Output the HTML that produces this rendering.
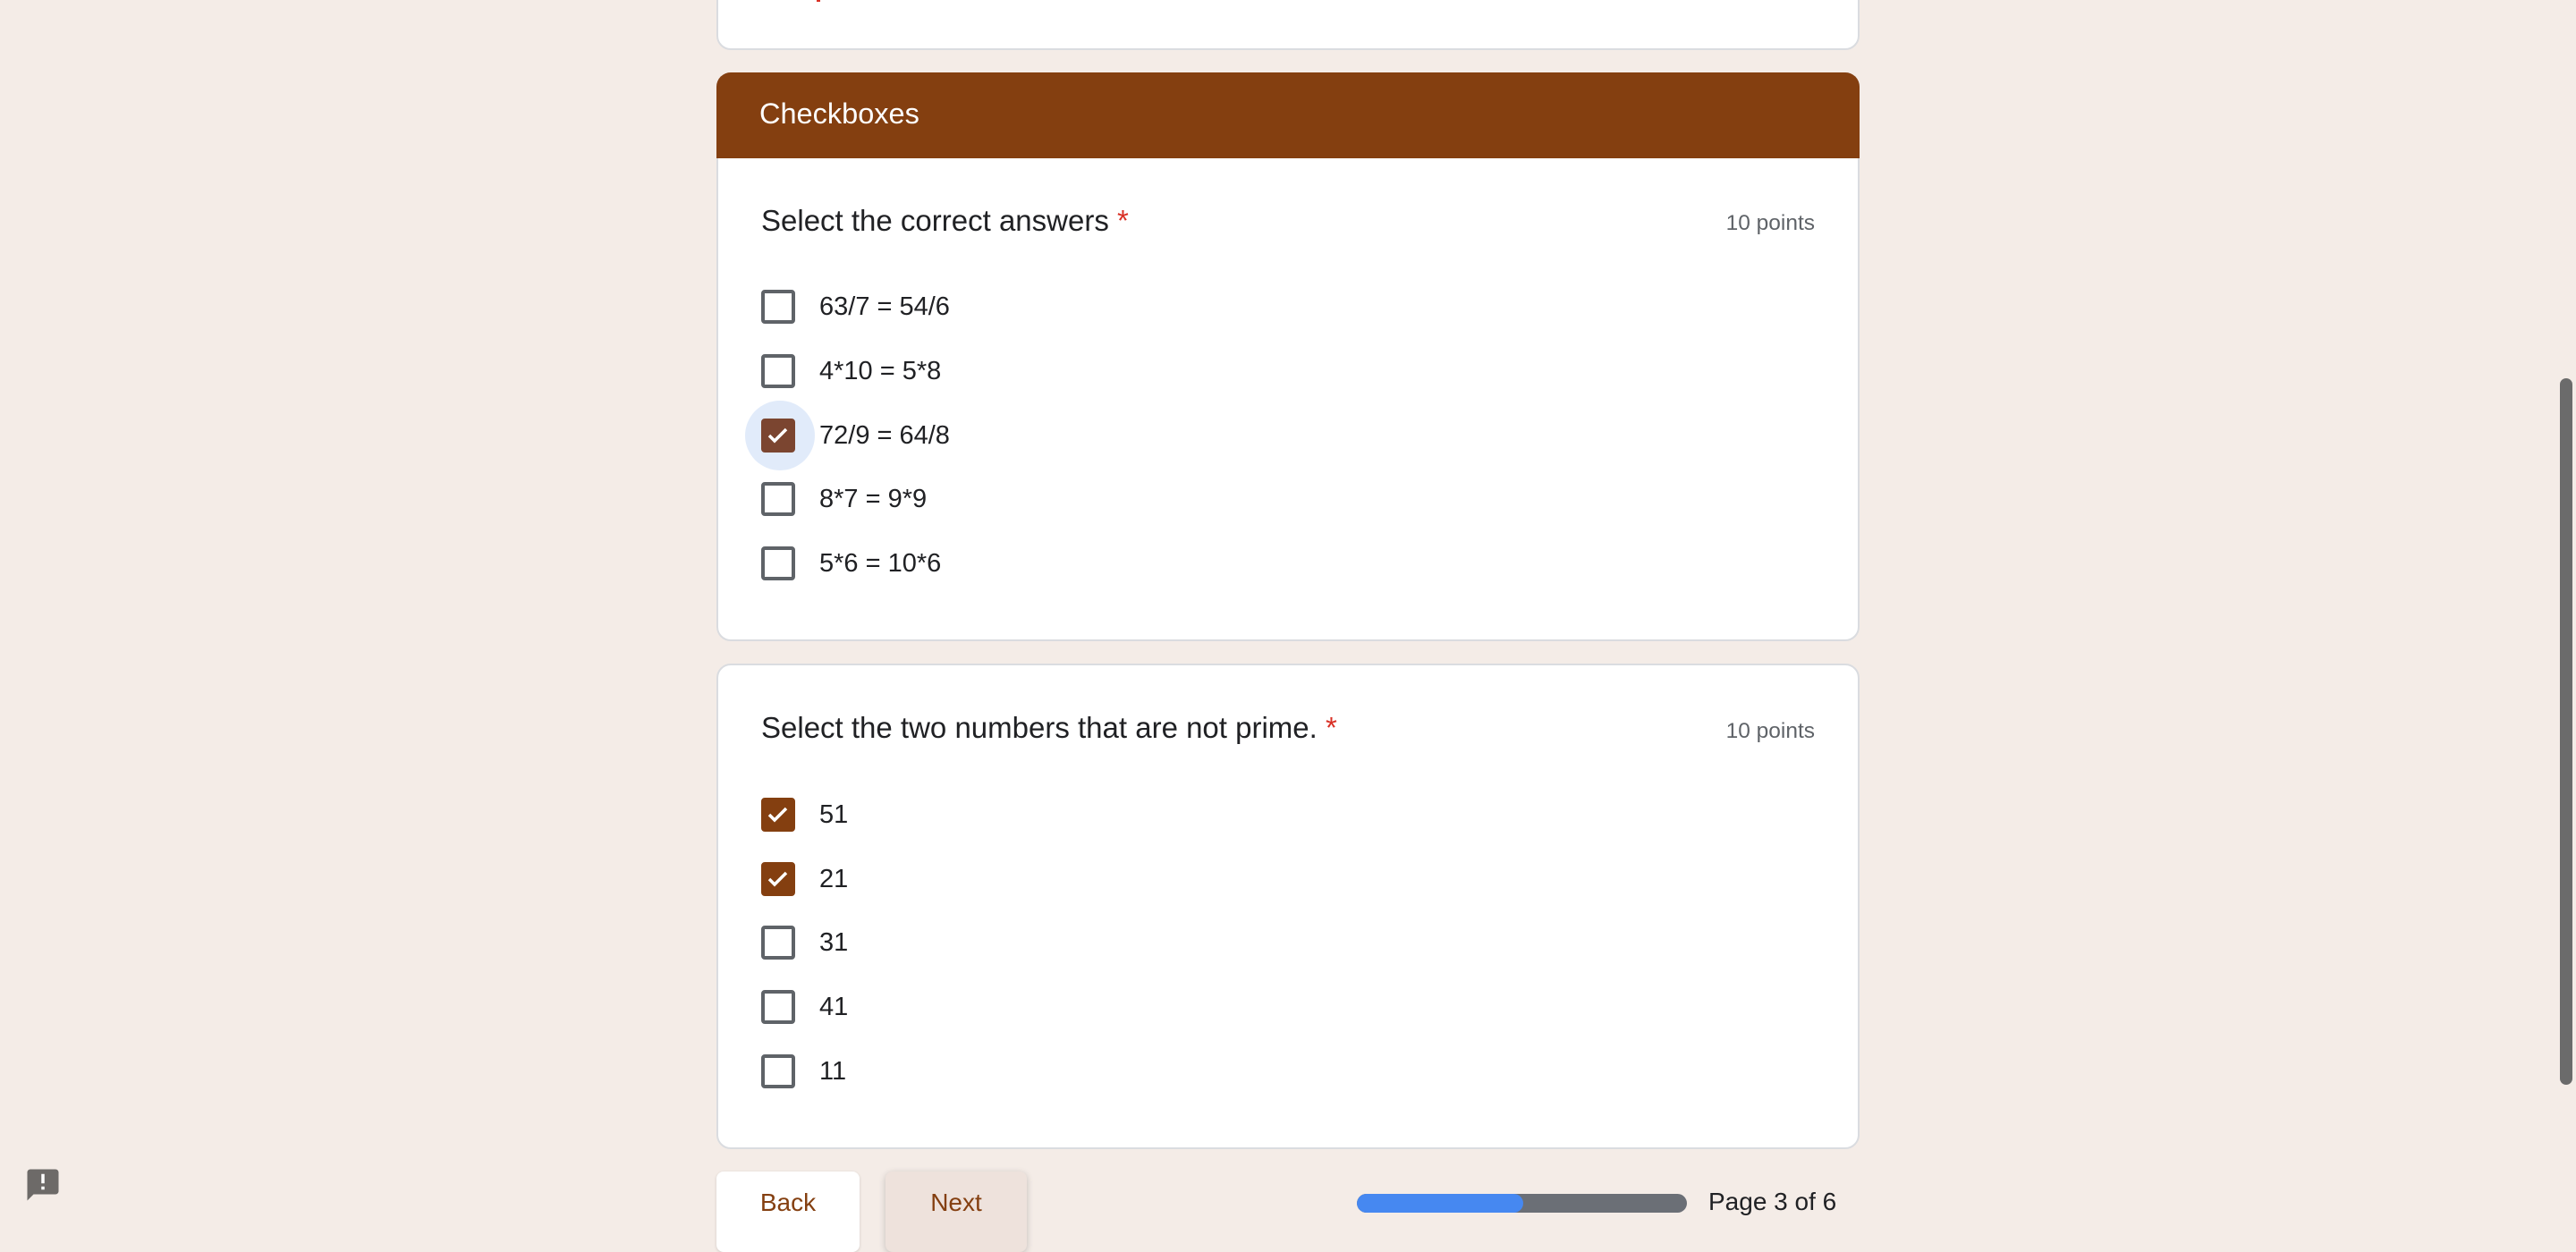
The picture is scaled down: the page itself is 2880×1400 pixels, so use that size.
<!DOCTYPE html>
<html><head><style>
body{margin:0;width:2880px;height:1382px;background:#f4ece7;font-family:"Liberation Sans",Arial,sans-serif;position:relative;overflow:hidden;color:#202124}
.card{position:absolute;left:801px;width:1278px;background:#fff;border:2px solid #dadce0;border-radius:16px;box-sizing:border-box}
.hdr{position:absolute;left:801px;width:1278px;top:81px;height:96px;background:#843f10;border-radius:16px 16px 0 0;color:#fff;font-size:32.5px}
.q{position:absolute;left:48px;font-size:33px}
.q span{color:#d93025}
.pts{position:absolute;right:48px;font-size:24.5px;color:#5f6368}
.opt{position:absolute;left:48px;height:40px;font-size:29px;line-height:40px}
.cb{position:absolute;left:0;top:1px;width:38px;height:38px;box-sizing:border-box;border:4px solid #5f6368;border-radius:4px}
.cb.on{background:#843f10;border-color:#843f10}
.opt .t{position:absolute;left:65px;white-space:nowrap}
.btn{position:absolute;top:1310px;width:160px;height:90px;border-radius:8px;color:#843f10;font-size:28px;text-align:center;line-height:70px}
</style></head><body>
<div class="card" style="top:-20px;height:76px"><div style="position:absolute;left:110px;top:14px;width:4px;height:6px;background:#d93025"></div></div>
<div class="card" style="top:81px;height:636px"></div>
<div class="hdr"><div style="position:absolute;left:48px;top:28px">Checkboxes</div></div>
<div class="card" style="top:81px;height:636px;background:none;border-color:transparent">
 <div class="q" style="top:145px">Select the correct answers <span>*</span></div>
 <div class="pts" style="top:153px">10 points</div>
 <div class="opt" style="top:240px"><div class="cb"></div><div class="t">63/7 = 54/6</div></div>
 <div class="opt" style="top:312px"><div class="cb"></div><div class="t">4*10 = 5*8</div></div>
 <div class="opt" style="top:384px"><div style="position:absolute;left:-18px;top:-19px;width:78px;height:78px;border-radius:50%;background:#e1ebfa"></div><div class="cb on" style="background:#7b4530;border-color:#7b4530"><svg width="30" height="30" viewBox="0 0 30 30" style="position:absolute;left:0;top:0"><path d="M5 15l6 6 13-13" stroke="#fff" stroke-width="3.5" fill="none"/></svg></div><div class="t">72/9 = 64/8</div></div>
 <div class="opt" style="top:455px"><div class="cb"></div><div class="t">8*7 = 9*9</div></div>
 <div class="opt" style="top:527px"><div class="cb"></div><div class="t">5*6 = 10*6</div></div>
</div>
<div class="card" style="top:742px;height:543px">
 <div class="q" style="top:51px">Select the two numbers that are not prime. <span>*</span></div>
 <div class="pts" style="top:60px">10 points</div>
 <div class="opt" style="top:147px"><div class="cb on"><svg width="30" height="30" viewBox="0 0 30 30" style="position:absolute;left:0;top:0"><path d="M5 15l6 6 13-13" stroke="#fff" stroke-width="3.5" fill="none"/></svg></div><div class="t">51</div></div>
 <div class="opt" style="top:219px"><div class="cb on"><svg width="30" height="30" viewBox="0 0 30 30" style="position:absolute;left:0;top:0"><path d="M5 15l6 6 13-13" stroke="#fff" stroke-width="3.5" fill="none"/></svg></div><div class="t">21</div></div>
 <div class="opt" style="top:290px"><div class="cb"></div><div class="t">31</div></div>
 <div class="opt" style="top:362px"><div class="cb"></div><div class="t">41</div></div>
 <div class="opt" style="top:434px"><div class="cb"></div><div class="t">11</div></div>
</div>
<div class="btn" style="left:801px;background:#fff;box-shadow:0 1px 3px rgba(0,0,0,.15)">Back</div>
<div class="btn" style="left:990px;width:158px;background:#eee2dc;box-shadow:0 2px 8px rgba(0,0,0,.2)">Next</div>
<div style="position:absolute;left:1517px;top:1335px;width:369px;height:21px;border-radius:11px;background:#6b6f76;overflow:hidden"><div style="width:186px;height:100%;background:#4688f1;border-radius:11px"></div></div>
<div style="position:absolute;left:1910px;top:1328px;font-size:28px;color:#202124">Page 3 of 6</div>
<div style="position:absolute;left:2862px;top:423px;width:14px;height:790px;border-radius:7px;background:#6b6b6b"></div>
<svg style="position:absolute;left:27px;top:1304px" width="42" height="42" viewBox="0 0 24 24"><path d="M20 2H4c-1.1 0-2 .9-2 2v18l4-4h14c1.1 0 2-.9 2-2V4c0-1.1-.9-2-2-2z" fill="#6d6a68"/><path d="M11 5h2v6h-2zM11 13h2v2h-2z" fill="#fff"/></svg>
</body></html>
